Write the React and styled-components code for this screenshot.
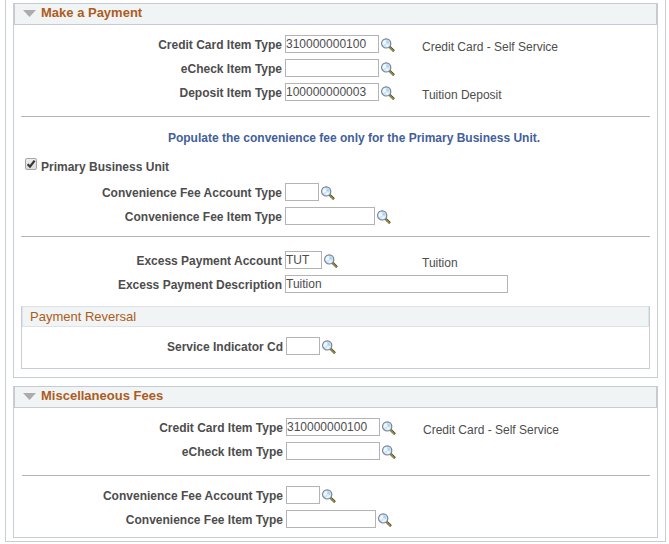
import React, { useState } from "react";
import styled, { createGlobalStyle } from "styled-components";

const GlobalStyle = createGlobalStyle`
  * { box-sizing: border-box; }
  body {
    margin: 0;
    background: #fff;
    color: #4d4d4d;
    font-family: "Liberation Sans", Arial, sans-serif;
    font-size: 12px;
  }
`;

const Frame = styled.main`
  margin: 0 3px 0 5px;
  padding: 3px 7px;
  border: 1px solid #c8ccd4;
  border-top: none;
`;

const Panel = styled.section`
  border: 1px solid #c8ccd4;
  border-top: none;

  & + & { margin-top: 8px; }
`;

const PanelHeader = styled.h2`
  display: flex;
  align-items: flex-start;
  height: 22px;
  margin: 0;
  border: 1px solid #c5cad4;
  background: #f0f4f5;
`;

const CollapseButton = styled.button`
  display: flex;
  align-items: center;
  gap: 5px;
  height: 18px;
  padding: 0 8px;
  border: none;
  background: none;
  color: #ad5c20;
  font: bold 13px/18px "Liberation Sans", Arial, sans-serif;
  cursor: pointer;
`;

const PanelBody = styled.div`
  padding: ${(p) => (p.$inset ? "7px 7px 6px 8px" : "7px 7px 8px")};
`;

const SubPanel = styled.section`
  margin-top: 10px;
  padding-bottom: 10px;
  border: 1px solid #c8ccd4;
  border-top: none;
`;

const SubPanelTitle = styled.h3`
  height: 21px;
  margin: 0 0 7px;
  padding: 0 7px;
  border: 1px solid #e0e3e5;
  background: #f0f4f5;
  color: #ad5c20;
  font-size: 13px;
  font-weight: normal;
  line-height: 19px;
`;

const Row = styled.div`
  display: grid;
  grid-template-columns: 264px 137px 1fr;
  height: 24px;
`;

const Label = styled.label`
  padding: 2px 3px 0 0;
  font-weight: bold;
  line-height: 22px;
  text-align: right;
  white-space: nowrap;
`;

const Control = styled.div`
  display: flex;
  align-items: center;
`;

const TextBox = styled.input`
  flex: none;
  width: ${(p) => p.$width}px;
  height: 18px;
  padding: 0 0 1px;
  border: 1px solid #b4b4b4;
  border-radius: 0;
  background: #fff;
  color: #4d4d4d;
  font: 12px "Liberation Sans", Arial, sans-serif;
`;

const LookupButton = styled.button`
  flex: none;
  width: 16px;
  height: 16px;
  padding: 0;
  border: none;
  background: none;
  cursor: pointer;

  svg { display: block; }
`;

const Description = styled.span`
  padding-top: 6px;
  line-height: 18px;
  white-space: nowrap;
`;

const Divider = styled.hr`
  height: 1px;
  margin: ${(p) => p.$margin};
  border: none;
  background: #b6b6ba;
`;

const Message = styled.p`
  margin: 9px 0 4px;
  padding-left: 37px;
  color: #43609a;
  font-weight: bold;
  line-height: 24px;
  text-align: center;
`;

const CheckLine = styled.div`
  display: flex;
  align-items: flex-start;
  gap: 4px;
  height: 26px;
  padding-left: 4px;
`;

const CheckHolder = styled.span`
  position: relative;
  width: 12px;
  height: 12px;
  margin-top: 4px;

  svg {
    position: absolute;
    inset: 0;
    pointer-events: none;
  }
`;

const CheckBox = styled.input`
  appearance: none;
  display: block;
  width: 12px;
  height: 12px;
  margin: 0;
  border: 1px solid #a6a6a6;
  border-radius: 2px;
  background: linear-gradient(#eeeeee, #dcdcdc);

  &:not(:checked) + svg { display: none; }
`;

const CheckLabel = styled.label`
  padding-top: 2px;
  font-weight: bold;
  line-height: 22px;
`;

function Magnifier() {
  return (
    <svg width="16" height="16" viewBox="0 0 16 16" aria-hidden="true">
      <path d="M10.6 10.8 15 15.2" stroke="#4b4820" strokeWidth="2.4" />
      <path d="M10.6 11.2 14.6 15.2" stroke="#a39d4c" strokeWidth="1.1" />
      <circle cx="7.2" cy="7.4" r="4.6" fill="#cbe5fb" stroke="#7c818c" strokeWidth="1.2" />
      <path d="M3.8 9A3.7 3.7 0 0 1 6.8 3.9L7 7.4Z" fill="#f1f9ff" />
      <path d="M7.6 4.2A3.4 3.4 0 0 1 10.4 7.4L7.6 7.2Z" fill="#a9d4f8" />
      <path d="M6.4 10.8A3.6 3.6 0 0 0 10.4 8.6L7.6 8.2Z" fill="#edf7ff" />
    </svg>
  );
}

function CollapsiblePanel({ title, inset, children }) {
  const [open, setOpen] = useState(true);
  return (
    <Panel>
      <PanelHeader>
        <CollapseButton type="button" aria-expanded={open} onClick={() => setOpen(!open)}>
          <svg width="13" height="7" viewBox="0 0 13 7" aria-hidden="true">
            <path d="M0 0H13L6.5 7Z" fill="#acacac" />
          </svg>
          {title}
        </CollapseButton>
      </PanelHeader>
      {open && <PanelBody $inset={inset}>{children}</PanelBody>}
    </Panel>
  );
}

function Field({ id, label, width, value = "", lookup = true, description }) {
  return (
    <Row>
      <Label htmlFor={id}>{label}</Label>
      <Control>
        <TextBox id={id} type="text" defaultValue={value} $width={width} />
        {lookup && (
          <LookupButton type="button" aria-label={`Look up ${label}`}>
            <Magnifier />
          </LookupButton>
        )}
      </Control>
      {description && <Description>{description}</Description>}
    </Row>
  );
}

export default function App() {
  return (
    <>
      <GlobalStyle />
      <Frame>
        <CollapsiblePanel title="Make a Payment">
          <Field id="pay-card" label="Credit Card Item Type" width={94} value="310000000100" description="Credit Card - Self Service" />
          <Field id="pay-echeck" label="eCheck Item Type" width={94} />
          <Field id="pay-deposit" label="Deposit Item Type" width={94} value="100000000003" description="Tuition Deposit" />
          <Divider $margin="12px 0 0" />
          <Message>Populate the convenience fee only for the Primary Business Unit.</Message>
          <CheckLine>
            <CheckHolder>
              <CheckBox id="primary-unit" type="checkbox" defaultChecked />
              <svg width="12" height="12" viewBox="0 0 12 12" aria-hidden="true">
                <path d="M2.6 6.2 5 8.6 9.6 2.6" fill="none" stroke="#383838" strokeWidth="2.3" />
              </svg>
            </CheckHolder>
            <CheckLabel htmlFor="primary-unit">Primary Business Unit</CheckLabel>
          </CheckLine>
          <Field id="pay-fee-account" label="Convenience Fee Account Type" width={34} />
          <Field id="pay-fee-item" label="Convenience Fee Item Type" width={90} />
          <Divider $margin="8px 0 11px" />
          <Field id="excess-account" label="Excess Payment Account" width={37} value="TUT" description="Tuition" />
          <Field id="excess-description" label="Excess Payment Description" width={223} value="Tuition" lookup={false} />
          <SubPanel>
            <SubPanelTitle>Payment Reversal</SubPanelTitle>
            <Field id="service-indicator" label="Service Indicator Cd" width={34} />
          </SubPanel>
        </CollapsiblePanel>
        <CollapsiblePanel title="Miscellaneous Fees" inset>
          <Field id="misc-card" label="Credit Card Item Type" width={94} value="310000000100" description="Credit Card - Self Service" />
          <Field id="misc-echeck" label="eCheck Item Type" width={94} />
          <Divider $margin="12px 0 7px" />
          <Field id="misc-fee-account" label="Convenience Fee Account Type" width={34} />
          <Field id="misc-fee-item" label="Convenience Fee Item Type" width={90} />
        </CollapsiblePanel>
      </Frame>
    </>
  );
}
